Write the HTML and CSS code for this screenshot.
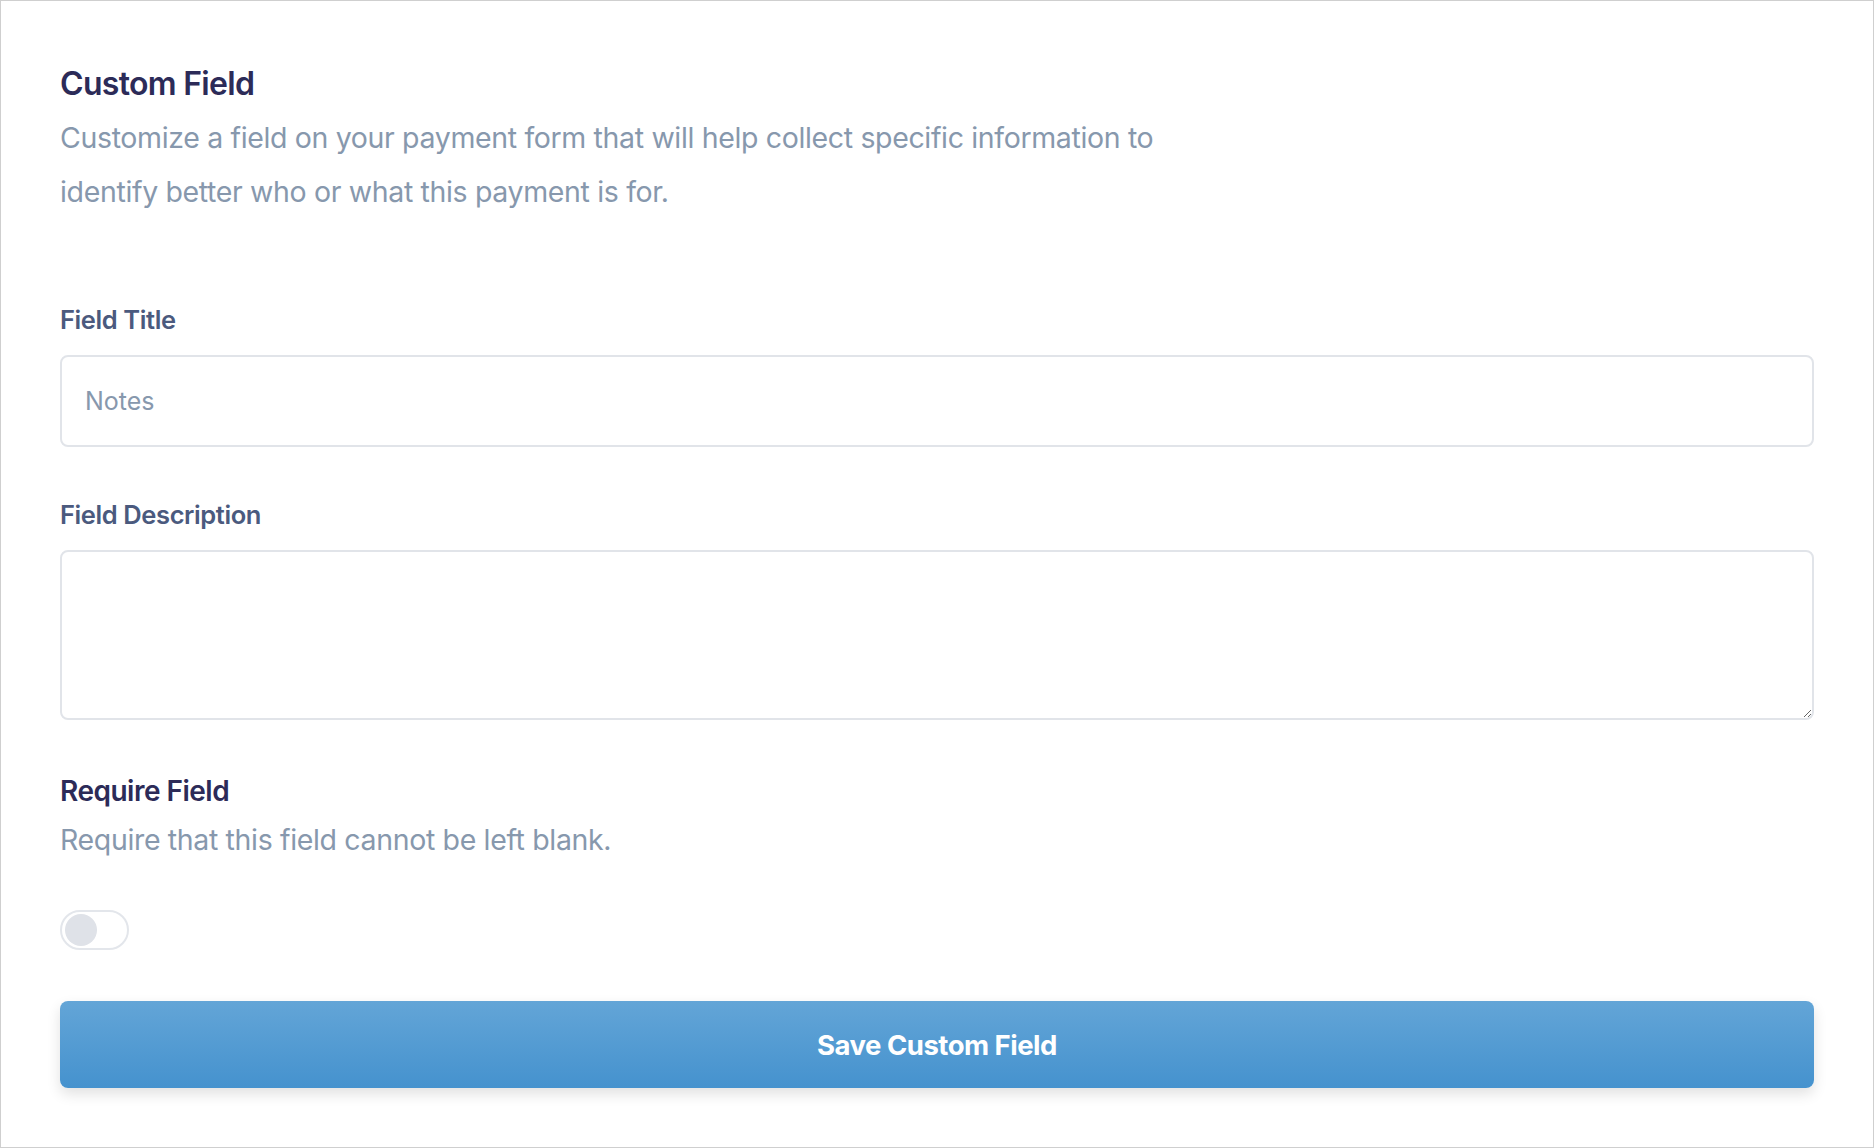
FILE: index.html
```html
<!DOCTYPE html>
<html lang="en">
    <head>
        <meta charset="UTF-8">
        <meta name="viewport" content="width=device-width, initial-scale=1.0">
        <title>Custom Field</title>
        <link rel="stylesheet" href="styles.css">
    </head>
    <body>
        <div class="panel">
            <header class="intro">
                <h1>Custom Field</h1>
                <p>Customize a field on your payment form that will help collect specific information to<br>
                    identify better who or what this payment is for.</p>
            </header>

            <form class="field-form" onsubmit="return false;">
                <label class="field-label" for="fieldTitle">Field Title</label>
                <input class="field-input" id="fieldTitle" type="text" placeholder="Notes">

                <label class="field-label" for="fieldDescription">Field Description</label>
                <textarea class="field-textarea" id="fieldDescription"></textarea>

                <div class="require">
                    <h2>Require Field</h2>
                    <p>Require that this field cannot be left blank.</p>
                    <label class="toggle">
                        <input type="checkbox">
                        <span class="toggle-track"><span class="toggle-knob"></span></span>
                    </label>
                </div>

                <button class="save-btn" type="submit">Save Custom Field</button>
            </form>
        </div>
    </body>
</html>
```

FILE: styles.css
```css
html, body {
    margin: 0;
    padding: 0;
    height: 100%;
}

body {
    font-family: 'Inter', 'Liberation Sans', sans-serif;
    background-color: #fff;
}

.panel {
    box-sizing: border-box;
    height: 100vh;
    border: 1px solid #cfcfcf;
    padding: 62px 59px 0 59px;
}

.intro h1 {
    margin: 0;
    font-size: 32px;
    font-weight: 600;
    letter-spacing: -0.7px;
    line-height: 42px;
    color: #2c2b58;
}

.intro p {
    margin: 6px 0 0 0;
    font-size: 28.5px;
    line-height: 54px;
    letter-spacing: -0.35px;
    color: #8798ad;
}

.field-form {
    display: flex;
    flex-direction: column;
    margin-top: 85px;
}

.field-label {
    font-size: 25.5px;
    font-weight: 600;
    letter-spacing: -0.4px;
    line-height: 32px;
    color: #4b5a7e;
    margin-bottom: 19px;
}

.field-input,
.field-textarea {
    box-sizing: border-box;
    width: 100%;
    border: 2px solid #e1e4e9;
    border-radius: 8px;
    background: #fff;
    font-family: inherit;
    font-size: 25px;
    color: #2c2b58;
    outline: none;
}

.field-input {
    height: 92px;
    padding: 0 23px;
    margin-bottom: 52px;
}

.field-input::placeholder {
    color: #8798ad;
}

.field-textarea {
    height: 170px;
    padding: 20px 23px;
    resize: vertical;
}

.require {
    margin-top: 53px;
}

.require h2 {
    margin: 0;
    font-size: 28px;
    font-weight: 600;
    letter-spacing: -0.5px;
    line-height: 36px;
    color: #2c2b58;
}

.require p {
    margin: 13px 0 0 0;
    font-size: 28.5px;
    line-height: 36px;
    letter-spacing: -0.35px;
    color: #8798ad;
}

.toggle {
    display: inline-block;
    margin-top: 52px;
    cursor: pointer;
}

.toggle input {
    display: none;
}

.toggle-track {
    box-sizing: border-box;
    display: flex;
    align-items: center;
    width: 69px;
    height: 40px;
    padding: 0 3px;
    border: 2px solid #e3e6eb;
    border-radius: 20px;
    background: #fff;
}

.toggle-knob {
    width: 32px;
    height: 32px;
    border-radius: 50%;
    background: #dfe2e8;
}

.save-btn {
    margin-top: 51px;
    height: 87px;
    width: 100%;
    border: none;
    border-radius: 8px;
    background: linear-gradient(180deg, #63a5d7, #4592ce);
    box-shadow: 0 6px 14px rgba(0, 0, 0, 0.12);
    color: #fff;
    font-family: inherit;
    font-size: 27.5px;
    font-weight: 700;
    letter-spacing: -0.5px;
    cursor: pointer;
}
```
